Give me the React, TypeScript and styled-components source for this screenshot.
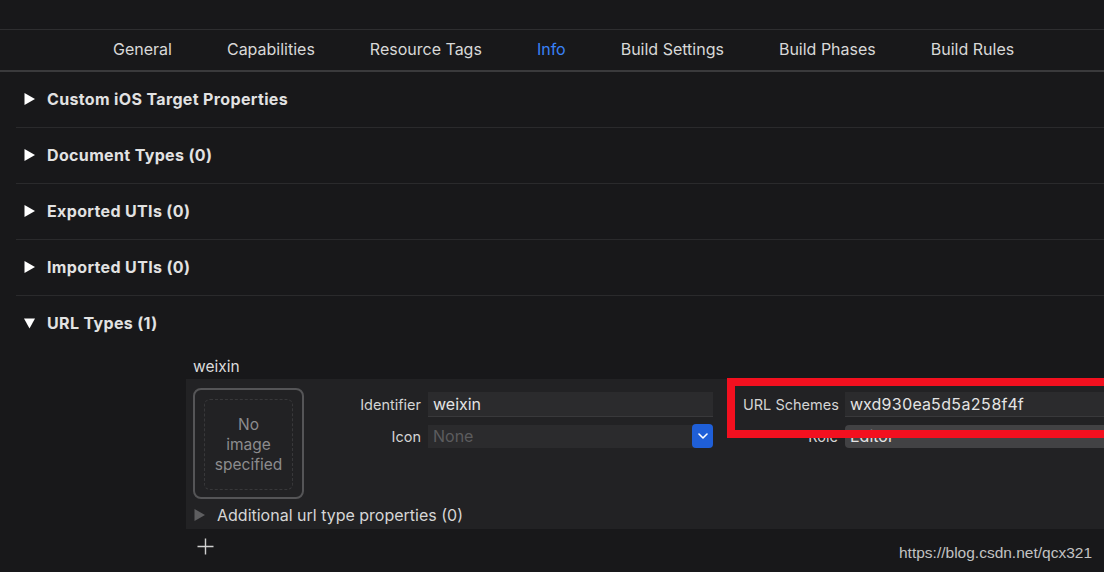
import styled, { createGlobalStyle } from 'styled-components';

const GlobalStyle = createGlobalStyle`
	html, body {
		margin: 0;
		padding: 0;
		background: #18181a;
	}
	body {
		font-family: Inter, "Noto Sans", "Liberation Sans", sans-serif;
		color: #dcdcdc;
		overflow: hidden;
	}
`

const Page = styled.div`
	position: relative;
	width: 1104px;
	height: 572px;
	overflow: hidden;
`

const TopStrip = styled.div`
	height: 29px;
	border-bottom: 1px solid #2e2e30;
`

const TabBar = styled.div`
	display: flex;
	align-items: center;
	gap: 55px;
	height: 38px;
	padding: 0 0 2px 113px;
	border-bottom: 2px solid #3a3a3c;
`

const Tab = styled.span<{ $active?: boolean }>`
	font-size: 16px;
	color: ${p => (p.$active ? '#3a82f7' : '#d8d8d8')};
`

const Sections = styled.div`
	margin-left: 16px;
`

const Section = styled.div`
	border-bottom: 1px solid #2a2a2c;
`

const SectionHeader = styled.div`
	display: flex;
	align-items: center;
	gap: 12px;
	height: 54px;
	padding: 0 0 1px 8px;
	font-size: 16px;
	font-weight: 700;
	color: #e2e2e2;
	letter-spacing: 0.35px;
`

const Disclosure = styled.svg`
	width: 11px;
	height: 12px;
	flex: none;
`

const UrlBody = styled.div`
	margin-left: 170px;
	margin-top: 3px;
`

const EntryName = styled.div`
	font-size: 15.5px;
	color: #dcdcdc;
	padding: 3px 0 0 7px;
	box-sizing: border-box;
	height: 25px;
	line-height: 20px;
`

const Panel = styled.div`
	background: #222224;
	height: 150px;
	padding: 9px 0 0 7px;
	box-sizing: border-box;
	display: flex;
	flex-direction: column;
`

const PanelTop = styled.div`
	display: flex;
`

const ImageWell = styled.div`
	width: 111px;
	height: 111px;
	box-sizing: border-box;
	border: 2px solid #555557;
	border-radius: 8px;
	padding: 9px;
	flex: none;
`

const WellInner = styled.div`
	height: 100%;
	border: 1px dashed #38383a;
	border-radius: 6px;
	display: flex;
	align-items: center;
	justify-content: center;
	text-align: center;
	font-size: 15.5px;
	line-height: 20px;
	color: #8c8c8e;
`

const Form = styled.div<{ $labelWidth: number; $fieldWidth?: number }>`
	display: grid;
	grid-template-columns: ${p => p.$labelWidth}px ${p => (p.$fieldWidth ? `${p.$fieldWidth}px` : '1fr')};
	column-gap: 7px;
	row-gap: 8px;
	align-content: start;
	padding-top: 4px;
	margin-left: ${p => (p.$fieldWidth ? '0' : '30px')};
	flex: ${p => (p.$fieldWidth ? 'none' : '1')};
`

const Label = styled.span`
	font-size: 14.5px;
	color: #d4d4d4;
	text-align: right;
	align-self: center;
	white-space: nowrap;
`

const Field = styled.div`
	height: 25px;
	box-sizing: border-box;
	background: #2b2b2d;
	border-bottom: 1px solid #39393b;
	padding-left: 5px;
	font-size: 16px;
	line-height: 25px;
	color: #e4e4e4;
	font-variant-numeric: tabular-nums;
	white-space: nowrap;
`

const Popup = styled.div<{ $light?: boolean }>`
	position: relative;
	height: 23px;
	box-sizing: border-box;
	background: ${p => (p.$light ? '#424244' : '#2b2b2d')};
	border-radius: ${p => (p.$light ? '4px 0 0 4px' : '0 4px 4px 0')};
	padding-left: 5px;
	font-size: 16px;
	line-height: 23px;
	color: ${p => (p.$light ? '#e4e4e4' : '#5c5c5e')};
`

const PopupButton = styled.div`
	position: absolute;
	right: 0;
	top: -1px;
	width: 21px;
	height: 24px;
	background: #1f5fd8;
	border-radius: 4px;
	display: flex;
	align-items: center;
	justify-content: center;
`

const AdditionalRow = styled.div`
	display: flex;
	align-items: center;
	gap: 12px;
	height: 30px;
	margin-top: 2px;
	padding-left: 1px;
	font-size: 16px;
	color: #d6d6d6;
`

const AddButton = styled.div`
	padding: 9px 0 0 11px;
	line-height: 0;
`

const Annotation = styled.div`
	position: absolute;
	left: 727px;
	top: 378px;
	width: 420px;
	height: 60px;
	box-sizing: border-box;
	border: 8px solid #f3101f;
	pointer-events: none;
`

const Watermark = styled.div`
	position: absolute;
	left: 899px;
	top: 544px;
	font-family: "Liberation Sans", Arial, sans-serif;
	font-size: 15.5px;
	color: #c2c2c2;
`

const tabs = ['General', 'Capabilities', 'Resource Tags', 'Info', 'Build Settings', 'Build Phases', 'Build Rules'];

const collapsed = ['Custom iOS Target Properties', 'Document Types (0)', 'Exported UTIs (0)', 'Imported UTIs (0)'];

const Triangle = ({ open, color = '#ffffff' }: { open?: boolean; color?: string }) => (
	<Disclosure viewBox="0 0 11 12">
		{open ? <path d="M0 1.5 L11 1.5 L5.5 11.5 Z" fill={color} /> : <path d="M0.5 0 L11 6 L0.5 12 Z" fill={color} />}
	</Disclosure>
);

export default function App() {
	return (
		<Page>
			<GlobalStyle />
			<TopStrip />
			<TabBar>
				{tabs.map(t => (
					<Tab key={t} $active={t === 'Info'}>{t}</Tab>
				))}
			</TabBar>
			<Sections>
				{collapsed.map(title => (
					<Section key={title}>
						<SectionHeader>
							<Triangle />
							{title}
						</SectionHeader>
					</Section>
				))}
				<div>
					<SectionHeader>
						<Triangle open />
						URL Types (1)
					</SectionHeader>
					<UrlBody>
						<EntryName>weixin</EntryName>
						<Panel>
							<PanelTop>
								<ImageWell>
									<WellInner>No<br />image<br />specified</WellInner>
								</ImageWell>
								<Form $labelWidth={117} $fieldWidth={285}>
									<Label>Identifier</Label>
									<Field>weixin</Field>
									<Label>Icon</Label>
									<Popup>
										None
										<PopupButton>
											<svg width="10" height="6" viewBox="0 0 10 6">
												<path d="M1 1 L5 5 L9 1" stroke="#fff" strokeWidth="1.6" fill="none" strokeLinecap="round" strokeLinejoin="round" />
											</svg>
										</PopupButton>
									</Popup>
								</Form>
								<Form $labelWidth={95}>
									<Label>URL Schemes</Label>
									<Field>wxd930ea5d5a258f4f</Field>
									<Label>Role</Label>
									<Popup $light>Editor</Popup>
								</Form>
							</PanelTop>
							<AdditionalRow>
								<Triangle color="#5e5e60" />
								Additional url type properties (0)
							</AdditionalRow>
						</Panel>
						<AddButton>
							<svg width="17" height="17" viewBox="0 0 17 17">
								<path d="M8.5 0.5 V16.5 M0.5 8.5 H16.5" stroke="#d0d0d0" strokeWidth="1.4" fill="none" />
							</svg>
						</AddButton>
					</UrlBody>
				</div>
			</Sections>
			<Annotation />
			<Watermark>https://blog.csdn.net/qcx321</Watermark>
		</Page>
	);
}
